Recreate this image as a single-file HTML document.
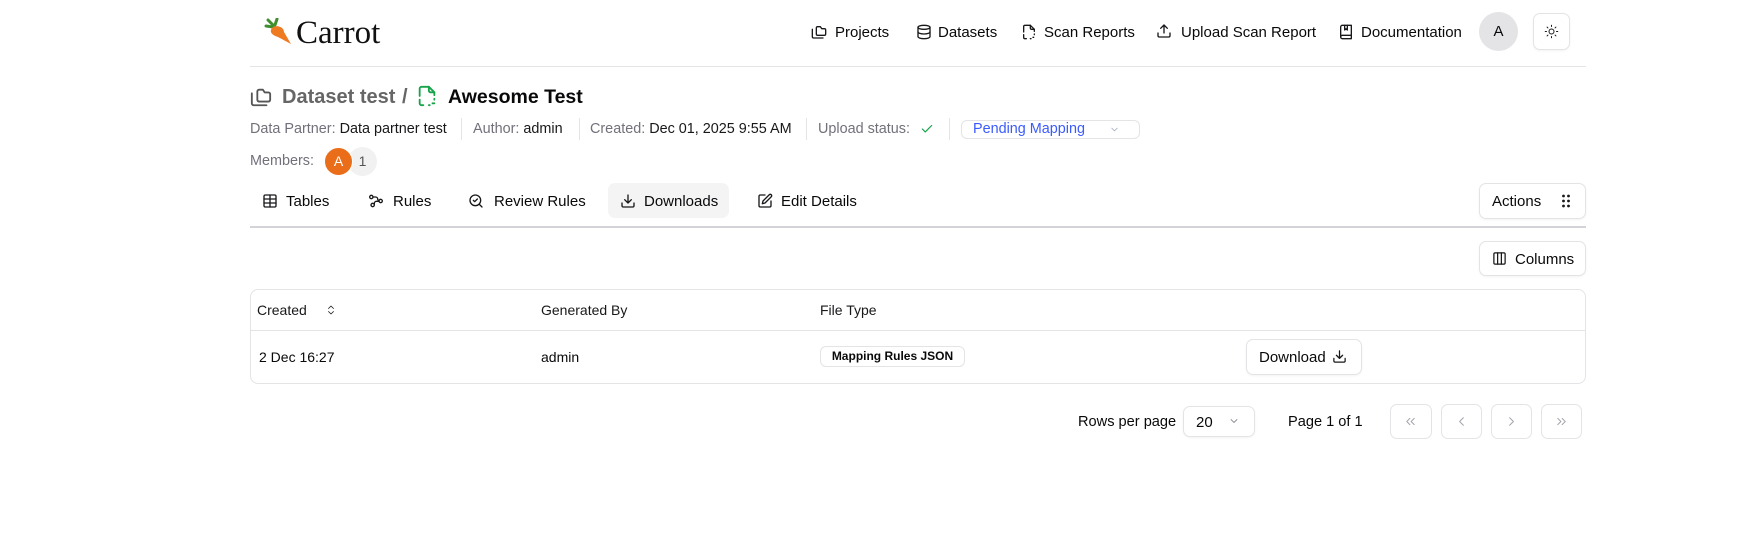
<!DOCTYPE html>
<html><head><meta charset="utf-8"><style>
*{box-sizing:border-box;margin:0;padding:0}
body{width:1755px;height:560px;background:#fff;font-family:"Liberation Sans",sans-serif;color:#09090b;position:relative;overflow:hidden}
.a{position:absolute;white-space:nowrap}
.nav{font-size:15px;top:24px}
svg{display:block}
.ic{position:absolute;fill:none;stroke:#18181b;stroke-width:2;stroke-linecap:round;stroke-linejoin:round}
.meta{font-size:14.4px;top:121px;color:#71717a}
.meta b{font-weight:normal;color:#18181b}
.sep{position:absolute;top:118px;width:1px;height:22px;background:#e4e4e7}
.tab{font-size:15px;top:193px}
.btn{position:absolute;border:1px solid #e4e4e7;border-radius:7px;background:#fff;box-shadow:0 1px 2px rgba(0,0,0,.05)}
.th{font-size:14px;top:302px;color:#18181b}
.td{font-size:14px;top:349px}
</style></head><body>
<!-- logo -->
<svg class="a" style="left:264px;top:18px" width="32" height="28" viewBox="0 0 32 28">
<path d="M10 8 L4 2 M11 7 L13 1 M9 9 L2 8" stroke="#3f8f2f" stroke-width="3" stroke-linecap="round" fill="none"/>
<path d="M8 10 C12 6 20 9 20 14 L27 26 L14 19 C8 17 5 14 8 10Z" fill="#ee7a22"/>
</svg>
<div class="a" style="left:296px;top:15px;font-family:'Liberation Serif',serif;font-size:33px;color:#111">Carrot</div>
<!-- nav -->
<svg class="ic" style="left:811px;top:24px" width="16" height="16" viewBox="0 0 24 24"><path d="M20 17a2 2 0 0 0 2-2V9a2 2 0 0 0-2-2h-4l-2-3h-4a2 2 0 0 0-2 2v9a2 2 0 0 0 2 2z"/><path d="M2 8v11a2 2 0 0 0 2 2h14"/></svg>
<div class="a nav" style="left:835px">Projects</div>
<svg class="ic" style="left:916px;top:24px" width="16" height="16" viewBox="0 0 24 24"><ellipse cx="12" cy="5" rx="9" ry="3"/><path d="M3 5v14a9 3 0 0 0 18 0V5"/><path d="M3 12a9 3 0 0 0 18 0"/></svg>
<div class="a nav" style="left:938px">Datasets</div>
<svg class="ic" style="left:1021px;top:24px" width="16" height="16" viewBox="0 0 24 24"><path d="M14 2v4a2 2 0 0 0 2 2h4"/><path d="M4 12V4a2 2 0 0 1 2-2h8l6 6v3"/><path d="M4 16v4a2 2 0 0 0 2 2h2"/><path d="M14 22h1M20 15v1M18 20h1"/></svg>
<div class="a nav" style="left:1044px">Scan Reports</div>
<svg class="ic" style="left:1156px;top:23px" width="16" height="16" viewBox="0 0 24 24"><path d="M12 3v12M17 8l-5-5-5 5M21 15v4a2 2 0 0 1-2 2H5a2 2 0 0 1-2-2v-4"/></svg>
<div class="a nav" style="left:1181px">Upload Scan Report</div>
<svg class="ic" style="left:1338px;top:24px" width="16" height="16" viewBox="0 0 24 24"><path d="M4 19.5v-15A2.5 2.5 0 0 1 6.5 2H20v20H6.5a2.5 2.5 0 0 1 0-5H20"/><path d="M10 2v7l2-2 2 2V2"/></svg>
<div class="a nav" style="left:1361px">Documentation</div>
<div class="a" style="left:1479px;top:12px;width:39px;height:39px;border-radius:50%;background:#e4e4e7;font-size:15px;text-align:center;line-height:39px">A</div>
<div class="btn" style="left:1533px;top:13px;width:37px;height:37px"></div>
<svg class="ic" style="left:1544px;top:24px;stroke-width:1.6" width="15" height="15" viewBox="0 0 24 24"><circle cx="12" cy="12" r="4"/><path d="M12 2v2M12 20v2M4.9 4.9l1.4 1.4M17.7 17.7l1.4 1.4M2 12h2M20 12h2M6.3 17.7l-1.4 1.4M19.1 4.9l-1.4 1.4"/></svg>
<div class="a" style="left:250px;top:66px;width:1336px;height:1px;background:#e4e4e7"></div>
<!-- title -->
<svg class="ic" style="left:250px;top:86px;stroke:#555" width="22" height="22" viewBox="0 0 24 24"><path d="M20 17a2 2 0 0 0 2-2V9a2 2 0 0 0-2-2h-4l-2-3h-4a2 2 0 0 0-2 2v9a2 2 0 0 0 2 2z"/><path d="M2 8v11a2 2 0 0 0 2 2h14"/></svg>
<div class="a" style="left:282px;top:86px;font-size:20px;font-weight:bold;color:#666">Dataset test</div>
<div class="a" style="left:402px;top:86px;font-size:20px;font-weight:bold;color:#666">/</div>
<svg class="ic" style="left:416px;top:85px;stroke:#16a34a" width="22" height="22" viewBox="0 0 24 24"><path d="M14 2v4a2 2 0 0 0 2 2h4"/><path d="M4 12V4a2 2 0 0 1 2-2h8l6 6v3"/><path d="M4 16v4a2 2 0 0 0 2 2h2"/><path d="M14 22h1M20 15v1M18 20h1M20 20v0"/></svg>
<div class="a" style="left:448px;top:86px;font-size:19.5px;font-weight:bold">Awesome Test</div>
<!-- meta -->
<div class="a meta" style="left:250px">Data Partner: <b>Data partner test</b></div>
<div class="sep" style="left:461px"></div>
<div class="a meta" style="left:473px">Author: <b>admin</b></div>
<div class="sep" style="left:579px"></div>
<div class="a meta" style="left:590px">Created: <b>Dec 01, 2025 9:55 AM</b></div>
<div class="sep" style="left:806px"></div>
<div class="a meta" style="left:818px">Upload status:</div>
<svg class="ic" style="left:920px;top:122px;stroke:#16a34a" width="14" height="14" viewBox="0 0 24 24"><path d="M20 6 9 17l-5-5"/></svg>
<div class="sep" style="left:949px"></div>
<div class="a" style="left:961px;top:120px;width:179px;height:19px;border:1px solid #e4e4e7;border-radius:6px"></div>
<div class="a" style="left:973px;top:121px;font-size:14.4px;color:#3b5bfd">Pending Mapping</div>
<svg class="ic" style="left:1109px;top:124px;stroke:#94a3b8;stroke-width:1.5" width="11" height="11" viewBox="0 0 24 24"><path d="m6 9 6 6 6-6"/></svg>
<div class="a" style="left:250px;top:153px;font-size:14.4px;color:#71717a">Members:</div>
<div class="a" style="left:348px;top:147px;width:29px;height:29px;border-radius:50%;background:#f1f1f2;font-size:14px;text-align:center;line-height:29px;color:#555">1</div>
<div class="a" style="left:324px;top:147px;width:29px;height:29px;border-radius:50%;background:#ea6d1a;border:1px solid #fff;font-size:14px;text-align:center;line-height:27px;color:#fff">A</div>
<!-- tabs -->
<svg class="ic" style="left:262px;top:193px" width="16" height="16" viewBox="0 0 24 24"><path d="M12 3v18"/><rect x="3" y="3" width="18" height="18" rx="2"/><path d="M3 9h18M3 15h18"/></svg>
<div class="a tab" style="left:286px">Tables</div>
<svg class="ic" style="left:368px;top:193px" width="16" height="16" viewBox="0 0 24 24"><circle cx="5" cy="6" r="2.5"/><circle cx="19" cy="12" r="2.5"/><circle cx="7" cy="18" r="2.5"/><path d="M7.5 6h4a3 3 0 0 1 3 3v0a3 3 0 0 0 2 2.5M16.5 12.5h-4a3 3 0 0 0-3 3 3 3 0 0 1-0 1"/></svg>
<div class="a tab" style="left:393px">Rules</div>
<svg class="ic" style="left:468px;top:193px" width="16" height="16" viewBox="0 0 24 24"><circle cx="11" cy="11" r="8"/><path d="m21 21-4.3-4.3M8 11l2 2 4-4"/></svg>
<div class="a tab" style="left:494px">Review Rules</div>
<div class="a" style="left:608px;top:183px;width:121px;height:35px;border-radius:7px;background:#f4f4f5"></div>
<svg class="ic" style="left:620px;top:193px" width="16" height="16" viewBox="0 0 24 24"><path d="M12 3v12M7 10l5 5 5-5M21 15v4a2 2 0 0 1-2 2H5a2 2 0 0 1-2-2v-4"/></svg>
<div class="a tab" style="left:644px">Downloads</div>
<svg class="ic" style="left:757px;top:193px" width="16" height="16" viewBox="0 0 24 24"><path d="M12 3H5a2 2 0 0 0-2 2v14a2 2 0 0 0 2 2h14a2 2 0 0 0 2-2v-7"/><path d="M18.4 2.6a2.1 2.1 0 0 1 3 3L12 15l-4 1 1-4z"/></svg>
<div class="a tab" style="left:781px">Edit Details</div>
<div class="btn" style="left:1479px;top:183px;width:107px;height:36px"></div>
<div class="a" style="left:1492px;top:193px;font-size:15px">Actions</div>
<svg class="a" style="left:1561px;top:193px" width="10" height="16" viewBox="0 0 10 16"><g fill="#18181b"><circle cx="2.5" cy="3" r="1.4"/><circle cx="7.5" cy="3" r="1.4"/><circle cx="2.5" cy="8" r="1.4"/><circle cx="7.5" cy="8" r="1.4"/><circle cx="2.5" cy="13" r="1.4"/><circle cx="7.5" cy="13" r="1.4"/></g></svg>
<div class="a" style="left:250px;top:226px;width:1336px;height:2px;background:#d4d4d8"></div>
<!-- columns -->
<div class="btn" style="left:1479px;top:241px;width:107px;height:35px"></div>
<svg class="ic" style="left:1492px;top:251px" width="15" height="15" viewBox="0 0 24 24"><rect x="3" y="3" width="18" height="18" rx="2"/><path d="M9 3v18M15 3v18"/></svg>
<div class="a" style="left:1515px;top:251px;font-size:15px">Columns</div>
<!-- table -->
<div class="a" style="left:250px;top:289px;width:1336px;height:95px;border:1px solid #e4e4e7;border-radius:8px"></div>
<div class="a" style="left:251px;top:330px;width:1334px;height:1px;background:#e4e4e7"></div>
<div class="a th" style="left:257px">Created</div>
<svg class="ic" style="left:325px;top:304px;stroke-width:1.6" width="12" height="12" viewBox="0 0 24 24"><path d="m7 15 5 5 5-5M7 9l5-5 5 5"/></svg>
<div class="a th" style="left:541px">Generated By</div>
<div class="a th" style="left:820px">File Type</div>
<div class="a td" style="left:259px">2 Dec 16:27</div>
<div class="a td" style="left:541px">admin</div>
<div class="a" style="left:820px;top:346px;width:145px;height:21px;border:1px solid #e4e4e7;border-radius:6px;font-size:12px;font-weight:bold;text-align:center;line-height:19px">Mapping Rules JSON</div>
<div class="btn" style="left:1246px;top:339px;width:116px;height:36px"></div>
<div class="a" style="left:1259px;top:349px;font-size:15px">Download</div>
<svg class="ic" style="left:1332px;top:349px" width="15" height="15" viewBox="0 0 24 24"><path d="M12 3v12M7 10l5 5 5-5M21 15v4a2 2 0 0 1-2 2H5a2 2 0 0 1-2-2v-4"/></svg>
<!-- pagination -->
<div class="a" style="left:1078px;top:414px;font-size:14.6px">Rows per page</div>
<div class="btn" style="left:1183px;top:406px;width:72px;height:31px"></div>
<div class="a" style="left:1196px;top:414px;font-size:15px">20</div>
<svg class="ic" style="left:1228px;top:415px;stroke:#71717a;stroke-width:1.6" width="12" height="12" viewBox="0 0 24 24"><path d="m6 9 6 6 6-6"/></svg>
<div class="a" style="left:1288px;top:414px;font-size:14.6px">Page 1 of 1</div>
<div class="btn" style="left:1390px;top:404px;width:42px;height:35px;box-shadow:none"></div>
<div class="btn" style="left:1441px;top:404px;width:41px;height:35px;box-shadow:none"></div>
<div class="btn" style="left:1491px;top:404px;width:41px;height:35px;box-shadow:none"></div>
<div class="btn" style="left:1541px;top:404px;width:41px;height:35px;box-shadow:none"></div>
<svg class="ic" style="left:1403px;top:414px;stroke:#a1a1aa;stroke-width:1.5" width="15" height="15" viewBox="0 0 24 24"><path d="m11 17-5-5 5-5M18 17l-5-5 5-5"/></svg>
<svg class="ic" style="left:1454px;top:414px;stroke:#a1a1aa;stroke-width:1.5" width="15" height="15" viewBox="0 0 24 24"><path d="m15 18-6-6 6-6"/></svg>
<svg class="ic" style="left:1504px;top:414px;stroke:#a1a1aa;stroke-width:1.5" width="15" height="15" viewBox="0 0 24 24"><path d="m9 18 6-6-6-6"/></svg>
<svg class="ic" style="left:1554px;top:414px;stroke:#a1a1aa;stroke-width:1.5" width="15" height="15" viewBox="0 0 24 24"><path d="m6 17 5-5-5-5M13 17l5-5-5-5"/></svg>
</body></html>
